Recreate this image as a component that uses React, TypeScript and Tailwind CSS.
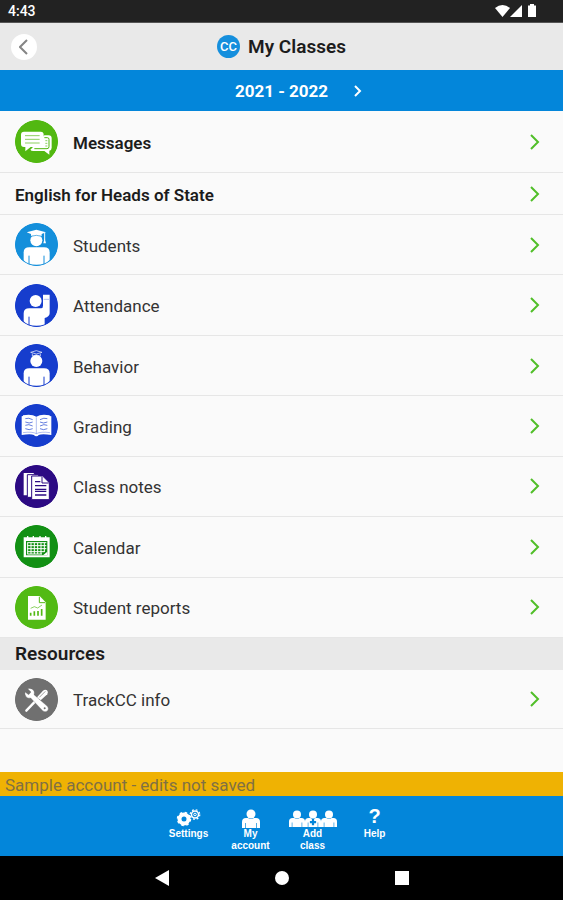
import type { ReactNode } from "react"

interface ClassItem {
  label: string
  color: string
  icon: ReactNode
}

const BODY = "M26 126V88q0-15 17-15h44q17 0 17 15v38z"

const classItems: ClassItem[] = [
  {
    label: "Students",
    color: "text-[#148fdb]",
    icon: (
      <>
        <circle cx="64" cy="52" r="18" fill="white" />
        <path d="M35 28l29-8 29 8-13 5v7q-16-7-32 0v-7z" fill="white" />
        <path d="M48 40q16-6 32 0" stroke="currentColor" strokeWidth="2" fill="none" />
        <path d="M89 29v22" stroke="white" strokeWidth="3" />
        <path d="M89 46l4 15h-8z" fill="white" />
        <path d={BODY} fill="white" />
        <path d="M42 98v28M87 98v28" stroke="currentColor" strokeWidth="3" />
      </>
    ),
  },
  {
    label: "Attendance",
    color: "text-[#163dcd]",
    icon: (
      <>
        <circle cx="62" cy="51" r="18" fill="white" />
        <path d="M26 126V88q0-15 17-15h35q6 0 6-8V32h20v56q0 10-15 14v24z" fill="white" />
        <path d="M42 98v27" stroke="currentColor" strokeWidth="3" />
        <path d="M86 46h16" stroke="currentColor" strokeWidth="1" />
      </>
    ),
  },
  {
    label: "Behavior",
    color: "text-[#163dcd]",
    icon: (
      <>
        <circle cx="64" cy="51" r="18" fill="white" />
        <path d="M47 25l17-5 17 5-17 5zM52 29v7q12-6 24 0v-7" fill="none" stroke="white" strokeWidth="2" />
        <path d={BODY} fill="white" />
        <path d="M42 98v28M87 98v28" stroke="currentColor" strokeWidth="3" />
      </>
    ),
  },
  {
    label: "Grading",
    color: "text-[#163dcd]",
    icon: (
      <>
        <path
          d="M20 37l4-1v-2q26-5 40 4 14-9 40-4v2l5 1v56q-28-4-38 0-2 4-7 4t-7-4q-10-4-37 0z"
          fill="white"
        />
        <path d="M64 40v49M24 86q28-4 40 3 14-7 41-3" stroke="currentColor" strokeWidth="1" fill="none" />
        <path
          d="M31 44q10-4 22 3M31 54q12 6 22 0M31 64q10-5 22 2M31 74q12 6 22 0M75 47q12-7 22-3M75 54q10 6 22 0M75 66q12-7 22-2M75 74q10 6 22 0"
          stroke="currentColor"
          strokeWidth="2"
          fill="none"
        />
      </>
    ),
  },
  {
    label: "Class notes",
    color: "text-[#2c0a83]",
    icon: (
      <>
        <path d="M26 24h29l5 5v62H26z" fill="white" />
        <path d="M37 29h32l4 5v63H37z" fill="white" stroke="currentColor" strokeWidth="3" />
        <path d="M50 33h33l20 20v51H50z" fill="white" stroke="currentColor" strokeWidth="3" />
        <path d="M81 35v19h20" fill="none" stroke="currentColor" strokeWidth="3" />
        <path d="M60 50h16M60 62h34M60 73h34M60 79h34M60 90h34" stroke="currentColor" strokeWidth="4" />
      </>
    ),
  },
  {
    label: "Calendar",
    color: "text-[#129014]",
    icon: (
      <>
        <path d="M26 37h78v60H26z" fill="white" />
        <path d="M38 33v8M55 33v8M75 33v8M92 33v8" stroke="white" strokeWidth="4" />
        <path d="M33 48h64v43H33z" fill="currentColor" />
        <path
          d="M37 53h57M37 62h57M37 71h57M37 80h51M38 53v34M48 53v34M58 53v34M68 53v34M78 53v34M88 53v28M37 87h44"
          stroke="white"
          strokeWidth="3"
        />
        <path d="M84 91l13-11v11z" fill="white" />
      </>
    ),
  },
  {
    label: "Student reports",
    color: "text-[#52ba14]",
    icon: (
      <>
        <path d="M39 30h35l18 19v52H39z" fill="white" />
        <path d="M73 32v18h18" fill="none" stroke="currentColor" strokeWidth="3" />
        <path d="M47 89v-9M58 89V76M69 89V75M80 89V69" stroke="currentColor" strokeWidth="5" />
        <path d="M47 67l11-5 10 4 13-9" fill="none" stroke="currentColor" strokeWidth="2" />
      </>
    ),
  },
]

const messagesItem: ClassItem = {
  label: "Messages",
  color: "text-[#52b811]",
  icon: (
    <>
      <path d="M88 46h13q9 0 9 9v28q0 8-7 9v12L88 93H55q-7 0-9-4z" fill="white" />
      <path d="M88 53h9q5 0 5 5v22q0 6-6 6H58" fill="none" stroke="currentColor" strokeWidth="3" />
      <path d="M27 35h50q9 0 9 9v28q0 9-9 9H47L31 94V81h-4q-9 0-9-9V44q0-9 9-9z" fill="white" />
      <path d="M30 47h44M30 58h44M30 69h44" stroke="currentColor" strokeWidth="2" />
      <path d="M91 62h6M91 70h6M91 78h6" stroke="currentColor" strokeWidth="2" />
    </>
  ),
}

const infoItem: ClassItem = {
  label: "TrackCC info",
  color: "text-[#707070]",
  icon: (
    <>
      <path d="M34 98l38-40" stroke="white" strokeWidth="7" strokeLinecap="round" />
      <path d="M66 58l18-20q6-5 12-1 5 5 1 12L77 67z" fill="white" />
      <path d="M73 58l18-18" stroke="currentColor" strokeWidth="2" />
      <path
        d="M38 32q14-3 19 7 2 6 0 11l40 35q6 8 0 14-7 5-14-1L47 60q-8 2-14-4-5-6-3-14l11 8 7-8z"
        fill="white"
        stroke="currentColor"
        strokeWidth="1"
      />
      <circle cx="89" cy="91" r="3" fill="currentColor" />
    </>
  ),
}

function Chevron() {
  return (
    <svg className="h-4 w-[10px] shrink-0" viewBox="0 0 10 16" fill="none" stroke="#50be28" strokeWidth="2">
      <path d="M1 1l7 7-7 7" />
    </svg>
  )
}

function IconRow({ item, bold = false }: { item: ClassItem; bold?: boolean }) {
  return (
    <a href="#" className="flex h-full items-center border-b border-[#e6e6e6] pr-[23px] pl-[15px]">
      <svg className={`h-[43px] w-[43px] shrink-0 rounded-full ${item.color}`} viewBox="0 0 129 129">
        <circle cx="64.5" cy="64.5" r="64" fill="currentColor" />
        {item.icon}
        <circle cx="64.5" cy="64.5" r="63" fill="none" stroke="currentColor" strokeWidth="4" />
      </svg>
      <span className={`ml-[15px] flex-1 pt-[2px] text-[17px] leading-5 ${bold ? "font-semibold text-[#1c1c1c]" : ""}`}>
        {item.label}
      </span>
      <Chevron />
    </a>
  )
}

function StatusBar() {
  return (
    <div className="flex h-[23px] items-center justify-between border-b border-[#555] bg-[#222] pr-[26px] pl-2 text-white">
      <span className="text-sm leading-5 font-medium">4:43</span>
      <svg className="h-[14px] w-[42px]" viewBox="0 0 42 14" fill="white">
        <path d="M0 4q7.500-6 15 0L7.500 13z" />
        <path d="M27 1v12H15z" />
        <path d="M35 0h4v1.500h2V13h-8V1.500h2z" />
      </svg>
    </div>
  )
}

function Person({ x = 0 }: { x?: number }) {
  return (
    <g transform={`translate(${x} 0)`}>
      <circle cx="9" cy="5" r="4.500" fill="white" />
      <path d="M0 19v-6q0-4 4-4h2q3 2 6 0h2q4 0 4 4v6z" fill="white" />
      <path d="M3.500 14v5M14.500 14v5" stroke="#0386da" strokeWidth="0.700" />
    </g>
  )
}

function NavButton({ label, children }: { label: string; children: ReactNode }) {
  return (
    <button
      type="button"
      className="flex w-[62px] flex-col items-center px-2 font-['Liberation_Sans',sans-serif] text-[10px] leading-3 font-bold"
    >
      <span className="flex h-5 items-center justify-center">{children}</span>
      {label}
    </button>
  )
}

export default function App() {
  return (
    <div className="flex min-h-screen flex-col bg-[#fafafa] font-[Roboto,sans-serif] text-[#333]">
      <StatusBar />

      <header className="grid h-[47px] grid-cols-[1fr_auto_1fr] items-center bg-[#e9e9e9] px-[11px]">
        <button
          type="button"
          aria-label="Back"
          className="flex h-[26px] w-[26px] items-center justify-center rounded-full bg-white"
        >
          <svg className="h-4 w-[10px]" viewBox="0 0 10 16" fill="none" stroke="#858585" strokeWidth="2">
            <path d="M8 1L1 8l7 7" />
          </svg>
        </button>
        <div className="flex items-center gap-2">
          <span className="flex h-[23px] w-[23px] items-center justify-center rounded-full bg-[#158fdd] text-[13px] leading-none font-medium text-white">
            CC
          </span>
          <h1 className="text-[19px] leading-6 font-semibold text-[#1c1c1c]">My Classes</h1>
        </div>
      </header>

      <div className="grid h-[41px] grid-cols-[1fr_auto_1fr] items-center bg-[#0386da] text-white">
        <span className="col-start-2 text-[17px] leading-6 font-bold">2021 - 2022</span>
        <button type="button" aria-label="Next year" className="ml-[26px] w-2">
          <svg className="h-3 w-2" viewBox="0 0 8 12" fill="none" stroke="white" strokeWidth="2">
            <path d="M1 1l5 5-5 5" />
          </svg>
        </button>
      </div>

      <main className="flex-1">
        <div className="h-[62px]">
          <IconRow item={messagesItem} bold />
        </div>
        <a href="#" className="flex h-[42px] items-center border-b border-[#e6e6e6] pr-[23px] pl-[15px]">
          <h2 className="flex-1 pt-[2px] text-[17px] leading-5 font-semibold text-[#1c1c1c]">
            English for Heads of State
          </h2>
          <Chevron />
        </a>
        <ul className="grid min-h-[423px] auto-rows-fr">
          {classItems.map((item) => (
            <li key={item.label}>
              <IconRow item={item} />
            </li>
          ))}
        </ul>
        <h2 className="bg-[#e9e9e9] px-[15px] pt-1 pb-1 text-[19px] leading-6 font-semibold text-[#1c1c1c]">
          Resources
        </h2>
        <div className="h-[59px]">
          <IconRow item={infoItem} />
        </div>
      </main>

      <p className="bg-[#efb203] px-[5px] pt-[2px] text-[17px] leading-[22px] text-[#807044]">
        Sample account - edits not saved
      </p>

      <nav className="flex h-[60px] items-start justify-center bg-[#0386da] pt-3 text-white">
        <NavButton label="Settings">
          <svg className="h-[18px] w-[25px]" viewBox="0 0 25 18" fill="none" stroke="white">
            <circle cx="8" cy="10" r="4.500" strokeWidth="4" />
            <circle cx="8" cy="10" r="6.500" strokeWidth="1.500" strokeDasharray="2.500 2.600" />
            <circle cx="19" cy="5.500" r="3.500" strokeWidth="1.500" />
            <circle cx="19" cy="5.500" r="1.300" strokeWidth="1" />
            <circle cx="19" cy="5.500" r="4.800" strokeWidth="1.200" strokeDasharray="1.800 2" />
          </svg>
        </NavButton>
        <NavButton label="My account">
          <svg className="h-[19px] w-[18px]" viewBox="0 0 18 19">
            <Person />
          </svg>
        </NavButton>
        <NavButton label="Add class">
          <svg className="h-[17px] w-12" viewBox="0 0 54 19">
            <Person />
            <Person x={18} />
            <Person x={36} />
            <path d="M27 10v7M23.500 13.500h7" stroke="#0386da" strokeWidth="2.500" />
          </svg>
        </NavButton>
        <NavButton label="Help">
          <span aria-hidden="true" className="pb-1 text-[20px] leading-5">
            ?
          </span>
        </NavButton>
      </nav>

      <div className="flex h-11 items-center justify-center bg-black">
        <button type="button" aria-label="System back" className="flex w-[120px] justify-center">
          <svg className="h-4 w-[14px]" viewBox="0 0 14 16" fill="white">
            <path d="M14 0v16L0 8z" />
          </svg>
        </button>
        <button type="button" aria-label="Home" className="flex w-[120px] justify-center">
          <span className="h-[14px] w-[14px] rounded-full bg-white" />
        </button>
        <button type="button" aria-label="Recent apps" className="flex w-[120px] justify-center">
          <span className="h-[14px] w-[14px] bg-white" />
        </button>
      </div>
    </div>
  )
}
